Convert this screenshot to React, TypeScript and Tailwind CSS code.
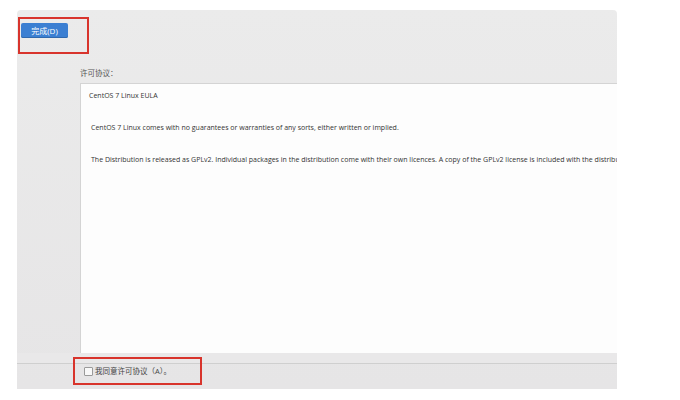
export default function App() {
  const eula = [
    'CentOS 7 Linux comes with no guarantees or warranties of any sorts, either written or implied.',
    'The Distribution is released as GPLv2. Individual packages in the distribution come with their own licences. A copy of the GPLv2 license is included with the distribution media.',
  ];

  return (
    <div
      className="h-[400px] w-[680px] bg-white pl-[17px] pt-[10px]"
      style={{ fontFamily: '"Open Sans", "Noto Sans CJK SC", sans-serif' }}
    >
      <div className="relative flex h-[379px] w-[600px] flex-col overflow-hidden rounded-t-[4px] bg-gradient-to-b from-[#ebebeb] to-[#e6e5e6]">
        {/* header */}
        <div className="h-[53px] pl-[4px] pt-[13px]">
          <button className="flex h-[15px] w-[47px] items-center justify-center rounded-[2px] bg-[#3b7fd2] text-[8px] text-white shadow-[inset_0_-1px_0_#2f68ad]">
            完成(D)
          </button>
        </div>
        <div className="pl-[63px] text-[7.5px] leading-[20px] text-[#555]">许可协议：</div>

        {/* license text */}
        <div className="ml-[63px] h-[270px] overflow-hidden border-l border-t border-[#d4d4d4] bg-[#fdfdfd] pl-[8px] pt-[7px] text-[7px] text-[#333]">
          <div className="whitespace-nowrap leading-[10px]">CentOS 7 Linux EULA</div>
          {eula.map((line) => (
            <div key={line} className="mt-[22px] whitespace-nowrap pl-[2px] leading-[10px]">
              {line}
            </div>
          ))}
        </div>

        {/* footer */}
        <div className="h-[10px] bg-[#e9e8e9]" />
        <div className="h-px bg-[#cfcfcf]" />
        <div className="flex items-center gap-[2px] pl-[67px] pt-[2px] text-[7.5px] text-[#444]">
          <span className="h-[9px] w-[9px] rounded-[1px] border border-[#9a9a9a] bg-[#f8f8f8]" />
          <span className="leading-[10px]">我同意许可协议（A）。</span>
        </div>

        {/* annotation boxes */}
        <div className="absolute left-[1px] top-[7px] h-[37px] w-[71px] border-2 border-[#d8342c]" />
        <div className="absolute left-[56px] top-[347px] h-[28px] w-[129px] border-2 border-[#d8342c]" />
      </div>
    </div>
  );
}
